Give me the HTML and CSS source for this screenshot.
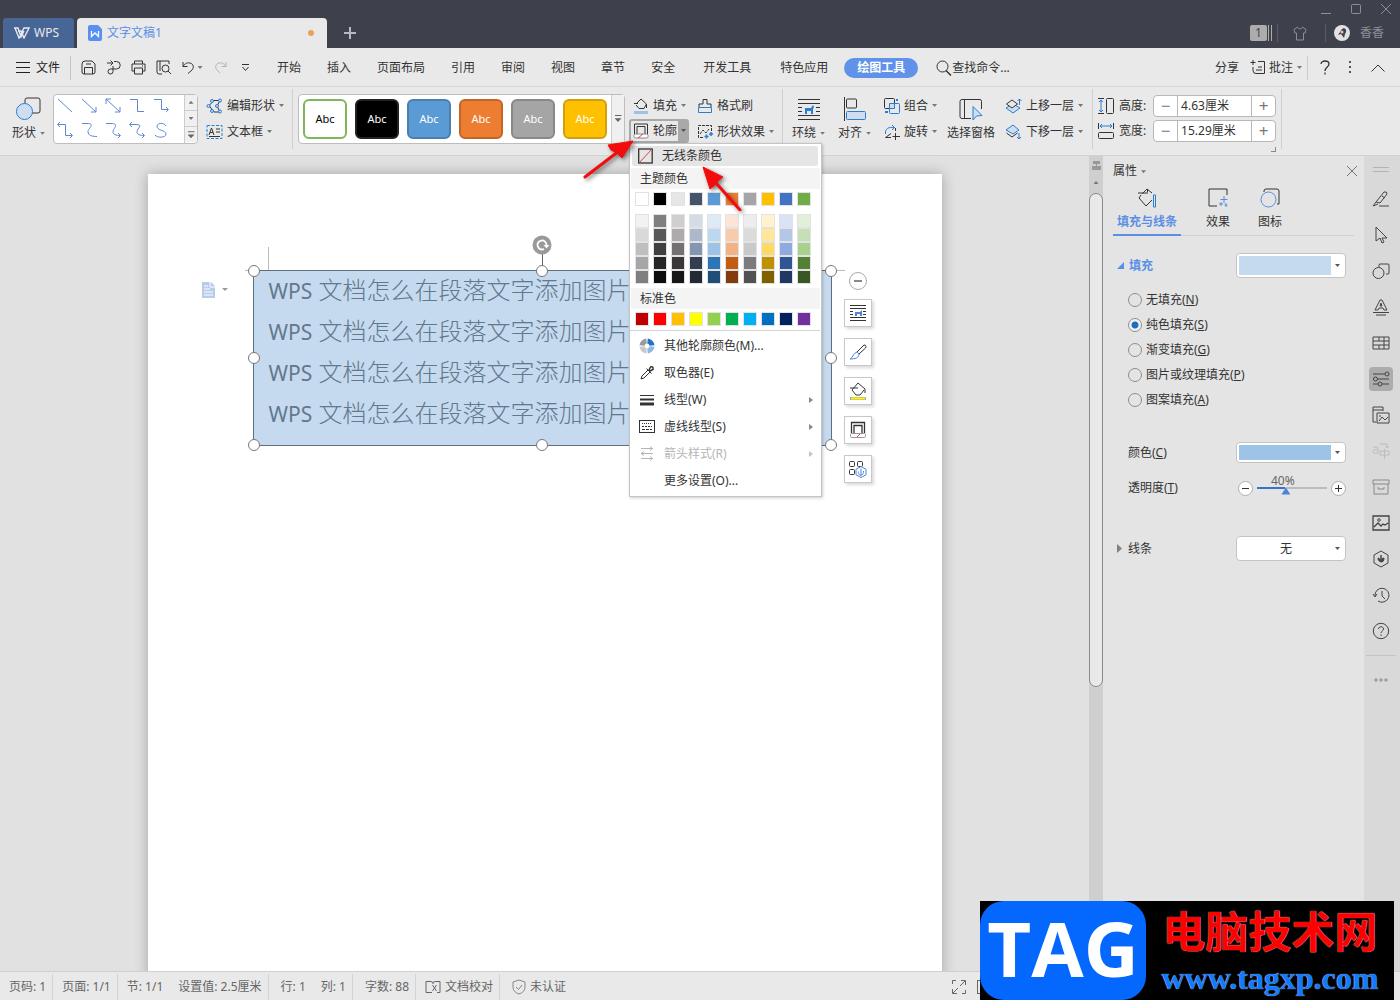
FILE: index.html
```html
<!DOCTYPE html>
<html lang="zh-CN">
<head>
  <meta charset="UTF-8" />
  <meta name="viewport" content="width=device-width, initial-scale=1.0"/>
  <title>文字文稿1 - WPS</title>
  <link rel="stylesheet" href="styles.css">
</head>
<body>
  <header class="titlebar">
    <button class="home-tab">
      <svg class="icon" width="17" height="12" viewBox="0 0 17 12"><path d="M0 1h4l3 9 3-6M4 4h3l3 7 5-10h-5L7 7M1 1l4 10 2-4" stroke-width="1.4"/></svg>
      WPS
    </button>
    <div class="doc-tab">
      <svg width="14" height="16" viewBox="0 0 14 16"><path d="M2 0h8l4 4v10a2 2 0 0 1-2 2H2a2 2 0 0 1-2-2V2a2 2 0 0 1 2-2z" fill="#5a8ff0"/><path d="M3.500 6v5.500L7 8l3.500 3.500V6" fill="none" stroke="#fff" stroke-width="1.300"/></svg>
      <span class="doc-name">文字文稿1</span>
      <span class="unsaved-dot"></span>
    </div>
    <button class="new-tab" aria-label="新建">
      <svg class="icon" width="12" height="12"><path d="M6 0v12M0 6h12" stroke-width="2"/></svg>
    </button>
    <div class="title-right">
      <div class="window-buttons">
        <button aria-label="最小化"><svg class="icon" width="10" height="10"><path d="M0 9.500h10"/></svg></button>
        <button aria-label="最大化"><svg class="icon" width="10" height="10"><rect x=".5" y=".5" width="9" height="9" rx="1"/></svg></button>
        <button aria-label="关闭"><svg class="icon" width="10" height="10"><path d="M0 0l10 10M10 0L0 10"/></svg></button>
      </div>
      <div class="account">
        <span class="badge">1</span>
        <span class="badge-lines"></span>
        <span class="account-sep"></span>
        <svg class="icon" width="14" height="15" viewBox="0 0 14 15"><path d="M4.500 1L1 3.500l1 3.500h1.500v7h7V7H12l1-3.500L9.500 1C9 3.500 5 3.500 4.500 1z"/></svg>
        <span class="account-sep"></span>
        <svg width="16" height="16" viewBox="0 0 16 16"><circle cx="8" cy="8" r="8" fill="#dfe3e5"/><path d="M8 4c2-2 5 0 4 3l-1 2-1 4-3-4-3 1z" fill="#4b3d45"/><circle cx="8" cy="7" r="1.500" fill="#e8c0b0"/></svg>
        <span>香香</span>
      </div>
    </div>
  </header>

  <nav class="menubar">
    <button class="file-btn">
      <svg class="icon" width="14" height="11"><path d="M0 .5h14M0 5.500h14M0 10.500h14"/></svg>
      文件
    </button>
    <div class="quick-tools">
      <button aria-label="保存"><svg class="icon" width="15" height="15" viewBox="0 0 15 15"><path d="M1 4q0-3 3-3h7l3 3v8q0 2-2 2H3q-2 0-2-2zM3.500 14V7.500h8V14M5 4h5"/></svg></button>
      <button aria-label="输出为PDF"><svg class="icon" width="15" height="15" viewBox="0 0 15 15"><path d="M1 3h6M4.500 .5L7 3 4.500 5.500M8 1.500h2.500a3.700 3.700 0 0 1 0 7.500H4.500a2.500 2.500 0 1 0 2.500 2.500V6"/></svg></button>
      <button aria-label="打印"><svg class="icon" width="15" height="15" viewBox="0 0 15 15"><path d="M3.500 4V1h8v3M3.500 11H1V4h13v7h-2.500M3.500 8h8v6h-8zM11 6h1"/></svg></button>
      <button aria-label="打印预览"><svg class="icon" width="16" height="15" viewBox="0 0 16 15"><path d="M6 14H3q-2 0-2-2V1h12v3M4 1v10M12 11l3 3"/><circle cx="9.500" cy="8.500" r="3.500"/></svg></button>
      <button aria-label="撤销" class="undo"><svg class="icon" width="12" height="13" viewBox="0 0 12 13"><path d="M1 1v4.500h4.500M1 5.500C3 2 6 1.500 8 2c4 1 4 5 2 7l-4 3.500"/></svg><i class="caret"></i></button>
      <button aria-label="恢复" class="disabled" disabled><svg class="icon" width="12" height="13" viewBox="0 0 12 13"><path d="M11 1v4.500H6.500M11 5.500C9 2 6 1.500 4 2c-4 1-4 5-2 7l3 3"/></svg></button>
      <button aria-label="自定义"><svg class="icon" width="9" height="8"><path d="M1 .5h7M1.500 3l3 3.500 3-3.500"/></svg></button>
    </div>
    <div class="tabs">
      <a href="#">开始</a>
      <a href="#">插入</a>
      <a href="#">页面布局</a>
      <a href="#">引用</a>
      <a href="#">审阅</a>
      <a href="#">视图</a>
      <a href="#">章节</a>
      <a href="#">安全</a>
      <a href="#" class="wide">开发工具</a>
      <a href="#" class="wide">特色应用</a>
      <a href="#" class="current">绘图工具</a>
    </div>
    <button class="search-btn">
      <svg class="icon" width="16" height="16" viewBox="0 0 16 16"><circle cx="6.500" cy="6.500" r="5.500"/><path d="M10 10.500l5 5" stroke-width="1.500"/></svg>查找命令...
    </button>
    <div class="menu-right">
      <button>分享</button>
      <button><svg class="icon" width="16" height="15" viewBox="0 0 16 15"><path d="M3 0v5M.5 2.500h5M8 1.500h6.500v12H6q-3 0-3-3V7M8 7h4M6 10h6"/></svg>批注<i class="caret"></i></button>
      <span class="menu-sep"></span>
      <button aria-label="帮助"><svg class="icon" width="10" height="15" viewBox="0 0 10 15"><path d="M1 4c0-4 8-4 8 0 0 3-4 3-4 7M5 12.500v2" stroke-width="1.300"/></svg></button>
      <button aria-label="更多"><svg width="3" height="13"><path d="M0 0h2v2H0zM0 5h2v2H0zM0 10h2v2H0z" fill="#555"/></svg></button>
      <button aria-label="收起"><svg class="icon" width="14" height="8"><path d="M.5 7.500L7 1l6.500 6.500"/></svg></button>
    </div>
  </nav>

  <section class="ribbon">
    <div class="ribbon-group first">
      <button class="big-btn">
        <svg class="icon" width="25" height="24" viewBox="0 0 25 24"><rect x="9" y="1" width="15" height="15" rx="2"/><circle cx="8.500" cy="14.500" r="8" class="blue tint"/></svg>
        <span>形状<i class="caret"></i></span>
      </button>
      <div class="line-gallery">
        <div class="line-grid">
          <svg class="icon" viewBox="0 0 24 24"><path d="M4 4l14 13"/></svg>
          <svg class="icon" viewBox="0 0 24 24"><path d="M4 4l14 13M18 12v5h-5"/></svg>
          <svg class="icon" viewBox="0 0 24 24"><path d="M4 4l14 13M18 12v5h-5M4 9V4h5"/></svg>
          <svg class="icon" viewBox="0 0 24 24"><path d="M4 4.500h7.500v12H18"/></svg>
          <svg class="icon" viewBox="0 0 24 24"><path d="M4 4.500h7.500v10H18M16 12l2.500 2.500L16 17"/></svg>
          <svg class="icon" viewBox="0 0 24 24"><path d="M4 5.500h7.500v11H18M6 3L3.500 5.500 6 8M16 14l2.500 2.500L16 19"/></svg>
          <svg class="icon" viewBox="0 0 24 24"><path d="M4 4.500h5c9 0 1 5 1 8 0 4 4 5 9 5"/></svg>
          <svg class="icon" viewBox="0 0 24 24"><path d="M4 4.500h5c9 0 2 5 2 8 0 3 3 4 7 4M16 14l2.500 2.500L16 19"/></svg>
          <svg class="icon" viewBox="0 0 24 24"><path d="M4 5.500h6c8 0 1 4 1 7 0 3 3 4 7 4M6 3L3.500 5.500 6 8M16 14l2.500 2.500L16 19"/></svg>
          <svg class="icon" viewBox="0 0 24 24"><path d="M16 7c-2-4-9-3-9 0 0 5 9 4 9 8 0 4-9 4-11 1"/></svg>
        </div>
        <div class="gallery-scroll">
          <button aria-label="向上"><i class="caret up"></i></button>
          <button aria-label="向下"><i class="caret"></i></button>
          <button aria-label="展开"><i class="caret bar"></i></button>
        </div>
      </div>
      <div class="btn-col">
        <button class="row-btn"><svg class="icon" width="17" height="16" viewBox="0 0 17 16"><path d="M3 7.500l5-5h6l-3 5.500 3 6H8z"/><g class="blue tint"><circle cx="2.500" cy="8" r="1.500"/><circle cx="6" cy="3" r="1.500"/><circle cx="14" cy="2.500" r="1.500"/><circle cx="11" cy="8" r="1.500"/><circle cx="14" cy="13.500" r="1.500"/><circle cx="6" cy="13" r="1.500"/></g></svg>编辑形状<i class="caret"></i></button>
        <button class="row-btn"><svg class="icon" width="17" height="16" viewBox="0 0 17 16"><rect x="1" y="1.500" width="15" height="13" class="blue" stroke-dasharray="3 1.500"/><path d="M3 11l2.500-7L8 11M4 8.500h3M10 5h4M10 8h4M3 12.500h11"/></svg>文本框<i class="caret"></i></button>
      </div>
    </div>
    <div class="ribbon-group styles">
      <div class="style-gallery">
        <button class="style-tile outline">Abc</button>
        <button class="style-tile black">Abc</button>
        <button class="style-tile sky">Abc</button>
        <button class="style-tile orange">Abc</button>
        <button class="style-tile gray">Abc</button>
        <button class="style-tile gold">Abc</button>
        <button class="style-more" aria-label="更多样式"><i class="caret bar"></i></button>
      </div>
      <div class="btn-col">
        <button class="row-btn framed"><svg class="icon" width="16" height="16" viewBox="0 0 16 16"><path d="M1 5.500h4M3.500 5.500L8 1l5.500 5L11 10.500H6L3 7M13.500 6v4"/><path d="M1 14.500h14" stroke="#9cc2ea" stroke-width="3"/></svg>填充<i class="caret"></i></button>
        <div class="outline-wrap">
          <button class="row-btn framed open"><svg class="icon" width="16" height="16" viewBox="0 0 16 16"><path d="M1.500 11V1h13v10M4 11V3.500h8V11"/><rect x="1" y="11" width="14" height="4" rx="1.500" fill="#fff" stroke="#888"/><path d="M5 15l5-4" stroke="#e04040"/></svg>轮廓<span class="split"><i class="caret"></i></span></button>
          <div class="color-menu">
            <button class="menu-item hot"><svg class="icon" width="15" height="16" viewBox="0 0 15 16"><rect x=".7" y="1" width="13.500" height="14" stroke-width="1.300"/><path d="M1.500 14.500l12-13" stroke="#d04545"/></svg>无线条颜色</button>
            <h4>主题颜色</h4>
            <div class="swatches" id="themeColors"></div>
            <div class="swatches shades" id="themeShades"></div>
            <h4>标准色</h4>
            <div class="swatches standard" id="standardColors"></div>
            <button class="menu-item"><svg width="16" height="16" viewBox="0 0 16 16"><g fill="none" stroke-width="5"><path d="M8.500 3A5 5 0 0 1 13 7.500" stroke="#2573c8"/><path d="M13 8.500A5 5 0 0 1 8.500 13" stroke="#8fb8e8"/><path d="M7.500 13A5 5 0 0 1 3 8.500" stroke="#c8c8c8"/><path d="M3 7.500A5 5 0 0 1 7.500 3" stroke="#999"/></g></svg>其他轮廓颜色(M)...</button>
            <button class="menu-item"><svg class="icon" width="16" height="16" viewBox="0 0 16 16"><path d="M2 14l1-3 6-6 2 2-6 6zM7.500 3.500l5 5"/><path d="M10 5l1.500-3q3-1 2.500 2.500L11 6z" stroke-width="1.500"/></svg>取色器(E)</button>
            <button class="menu-item"><svg class="icon" width="16" height="16" viewBox="0 0 16 16"><path d="M1 3.500h14"/><path d="M1 7.500h14" stroke-width="2"/><path d="M1 12h14" stroke-width="3"/></svg>线型(W)<i class="sub"></i></button>
            <button class="menu-item"><svg class="icon" width="16" height="16" viewBox="0 0 16 16"><rect x=".5" y="1.500" width="15" height="12"/><path d="M3 4.500h10" stroke-dasharray="1 1"/><path d="M3 7.500h10" stroke-dasharray="2 1"/><path d="M3 10.500h10" stroke-dasharray="3 1"/></svg>虚线线型(S)<i class="sub"></i></button>
            <button class="menu-item" disabled><svg class="icon" width="16" height="16" viewBox="0 0 16 16"><path d="M2 2.500h12M11 .5l2.500 2-2.500 2M2 7.500h12M5 5.500l-3 2 3 2M2 12.500h12M11 10.500l2.500 2-2.500 2"/></svg>箭头样式(R)<i class="sub"></i></button>
            <button class="menu-item"><svg width="16" height="16"></svg>更多设置(O)...</button>
          </div>
          <svg class="pointer-arrows" width="170" height="80" viewBox="0 0 170 80">
            <g fill="#f40c0c" stroke="#f40c0c" stroke-linejoin="round"><path d="M6 46l34-26" stroke-width="3" stroke-linecap="round"/><path d="M54 10L43 27l-5-5-6-3-3-5z"/><path d="M161 79l-24-27" stroke-width="3" stroke-linecap="round"/><path d="M124 36l20 10-5 4-3 4-5 4z"/></g>
          </svg>
        </div>
      </div>
      <div class="btn-col">
        <button class="row-btn"><svg class="icon" width="16" height="16" viewBox="0 0 16 16"><path d="M2 9V6h4V1.500h4V6h4v3"/><path d="M1.500 9.500h13v5h-13z" class="blue"/></svg>格式刷</button>
        <button class="row-btn"><svg class="icon" width="16" height="16" viewBox="0 0 16 16"><path d="M6 13.500H1.500v-12h13V7M3 10l3-4 3 3 3-4" stroke-dasharray="3 1"/><path d="M7.500 12.500h4M9.500 10.500v4M12 10h4M14 8v4" class="blue" stroke-width="1.500"/></svg>形状效果<i class="caret"></i></button>
      </div>
    </div>
    <div class="ribbon-group spaced">
      <button class="big-btn">
        <svg class="icon" width="24" height="24" viewBox="0 0 24 24"><path d="M1 2.500h22M1 6.500h22M1 10.500h4M19 10.500h4M1 14.500h4M19 14.500h4M1 18.500h22M1 22.500h22"/><path d="M8 17v-6h6l2-3 1 2-1 2v5h-2v-3h-4v3z" fill="#2b7cd3" stroke="none"/></svg>
        <span>环绕<i class="caret"></i></span>
      </button>
      <button class="big-btn">
        <svg class="icon" width="24" height="24" viewBox="0 0 24 24"><path d="M1.500 0v24"/><rect x="3.500" y="2" width="10" height="9" rx="1"/><rect x="3.500" y="14.500" width="19" height="8" rx="1" class="blue tint"/></svg>
        <span>对齐<i class="caret"></i></span>
      </button>
      <div class="btn-col">
        <button class="row-btn"><svg class="icon" width="16" height="16" viewBox="0 0 16 16"><rect x=".5" y=".5" width="10" height="10" rx="1"/><rect x="5.500" y="5.500" width="10" height="10" rx="1" class="blue"/><path d="M5.500 5.500h5v5h-5z" class="blue tint"/><path d="M13 1v2M1 14h3" class="blue" stroke-width="2"/></svg>组合<i class="caret"></i></button>
        <button class="row-btn"><svg class="icon" width="16" height="16" viewBox="0 0 16 16"><path d="M1.500 10C1 4 5 3 10 3.500M8 1l2.500 2.500L8 6" class="blue"/><path d="M7 9.500l-5.500 4H7M8.500 12.500H16M11.500 9v7M11.500 4v3"/></svg>旋转<i class="caret"></i></button>
      </div>
      <button class="big-btn">
        <svg class="icon" width="24" height="24" viewBox="0 0 24 24"><path d="M12 21.500H3q-2 0-2-2v-15q0-2 2-2h18q1.500 0 1.500 2V12M5.500 2.500v19"/><path d="M14 9.500l9 9-5.500 .500-3.500 4z" class="blue tint"/></svg>
        <span>选择窗格</span>
      </button>
      <div class="btn-col">
        <button class="row-btn"><svg class="icon" width="17" height="16" viewBox="0 0 17 16"><path d="M1 10l7-4 7 4-7 5z" class="blue tint"/><path d="M1.500 6L7 2l5.500 4L7 10z" fill="#e9e9e9"/><path d="M14.500 7V1M12.500 3l2-2 2 2" class="blue"/></svg>上移一层<i class="caret"></i></button>
        <button class="row-btn"><svg class="icon" width="17" height="16" viewBox="0 0 17 16"><path d="M1.500 9L7 13l5.500-4"/><path d="M1 6l7-5 6 5-6 4z" class="blue tint"/><path d="M14 9v6M12 13l2 2 2-2" class="blue"/></svg>下移一层<i class="caret"></i></button>
      </div>
    </div>
    <div class="ribbon-group size-group">
      <div class="size-fields">
        <div class="size-row">
          <svg class="icon" width="16" height="18" viewBox="0 0 16 18"><path d="M0 1.500h6M0 16.500h6"/><path d="M3 3v12M1 5l2-2 2 2M1 13l2 2 2-2" class="blue"/><rect x="8.500" y="1.500" width="7" height="15" rx="1"/></svg>
          <label for="shapeHeight">高度:</label>
          <div class="spinner"><button aria-label="减小高度">−</button><input id="shapeHeight" type="text" value="4.63厘米"><button aria-label="增大高度">+</button></div>
        </div>
        <div class="size-row">
          <svg class="icon" width="16" height="18" viewBox="0 0 16 18"><path d="M.5 1v6M15.500 1v6"/><path d="M2 4h12M4 2L2 4l2 2M12 2l2 2-2 2" class="blue"/><rect x=".5" y="10.500" width="15" height="6" rx="1"/></svg>
          <label for="shapeWidth">宽度:</label>
          <div class="spinner"><button aria-label="减小宽度">−</button><input id="shapeWidth" type="text" value="15.29厘米"><button aria-label="增大宽度">+</button></div>
        </div>
      </div>
      <span class="corner"></span>
    </div>
  </section>

  <div class="workspace">
    <main class="canvas">
      <div class="page">
        <svg class="para-mark" width="28" height="16" viewBox="0 0 28 16"><path d="M1 0h9l4 4v12H1z" fill="#b7cce8"/><path d="M3 4h4M3 7h6M3 10h9M3 13h9M9 0v5h5" stroke="#fff" fill="none"/><path d="M21 6h6l-3 3z" fill="#999"/></svg>
        <span class="margin-mark"></span>
        <div class="text-shape">
          <p><span>WPS</span> 文档怎么在段落文字添加图片</p>
          <p><span>WPS</span> 文档怎么在段落文字添加图片</p>
          <p><span>WPS</span> 文档怎么在段落文字添加图片</p>
          <p><span>WPS</span> 文档怎么在段落文字添加图片</p>
          <i class="handle nw"></i><i class="handle n"></i><i class="handle ne"></i>
          <i class="handle w"></i><i class="handle e"></i>
          <i class="handle sw"></i><i class="handle s"></i><i class="handle se"></i>
          <svg class="rotate" width="20" height="34" viewBox="0 0 20 34"><path d="M10.500 18v16" stroke="#666"/><circle cx="10" cy="10" r="9.500" fill="#999"/><path d="M14.500 10A4.500 4.500 0 1 0 12 14" fill="none" stroke="#fff" stroke-width="1.800"/><path d="M11.500 10h6l-3 3.500z" fill="#fff"/></svg>
        </div>
        <div class="float-tools">
          <button class="collapse" aria-label="收起"><svg class="icon" width="8" height="2"><path d="M0 1h8" stroke-width="2"/></svg></button>
          <button aria-label="布局选项"><svg class="icon" width="18" height="18" viewBox="0 0 18 18"><path d="M1 1.500h16M1 4.500h16M1 7.500h3M14 7.500h3M1 10.500h3M14 10.500h3M1 13.500h16M1 16.500h16"/><path d="M6 12V8h5l2-2v6h-2v-2H8v2z" fill="#4b83dd" stroke="none"/></svg></button>
          <button aria-label="形状样式"><svg class="icon" width="18" height="18" viewBox="0 0 18 18"><path d="M8 9l7-7q3 0 1.500 3L10 11z"/><path d="M8 9l2 2c0 4-4 5-9 5 3-1 3-6 7-7z" stroke="#4b83dd"/></svg></button>
          <button aria-label="形状填充"><svg class="icon" width="18" height="18" viewBox="0 0 18 18"><path d="M1 6h8M3 8l6-7 7 6v4M15 8l-4 5H7L3 8"/><path d="M1 16.500h16" stroke="#aaa" stroke-width="3"/><path d="M2 16.500h14" stroke="#fff200" stroke-width="2"/></svg></button>
          <button aria-label="形状轮廓"><svg class="icon" width="18" height="18" viewBox="0 0 18 18"><path d="M2.500 12V1.500h13V12M5 13V4.500h8V13" stroke-width="1.300"/><rect x="1.500" y="12.500" width="15" height="4" rx="1" stroke="#999"/><path d="M8 16l3-3" stroke="#e04040"/></svg></button>
          <button aria-label="更多功能"><svg class="icon" width="19" height="18" viewBox="0 0 19 18"><rect x="1.500" y="1.500" width="5" height="5" rx="1"/><rect x="9.500" y="1.500" width="5" height="5" rx="1"/><rect x="1.500" y="9.500" width="5" height="5" rx="1"/><path d="M13 6.500l5 2.800v5.500L13 17.500l-5-2.700V9.300z" stroke="#4b83dd" fill="#fff"/><path d="M13 8.500v7c-3-1-3-3-2.500-4M13 15c2 0 2.500-2 2.500-4" stroke="#4b83dd"/></svg></button>
        </div>
      </div>
    </main>

    <div class="scrollbar">
      <svg width="9" height="9"><path d="M1 0h7v3H5v2h4v4H0V5h4V3H1z" fill="#999"/></svg>
      <i class="caret up"></i>
      <div class="scroll-thumb"></div>
    </div>

    <aside class="panel">
      <div class="panel-head">
        <span>属性<i class="caret"></i></span>
        <button aria-label="关闭"><svg class="icon" width="10" height="10"><path d="M0 0l10 10M10 0L0 10"/></svg></button>
      </div>
      <div class="panel-tabs">
        <button class="active"><svg class="icon" width="20" height="20" viewBox="0 0 20 20"><path d="M1 5h10M5 6l5-5 5 4M4 7l-2 3 7 8 6-6M10.500 1v3"/><path d="M16.500 7h2v12h-2z" class="blue"/></svg>填充与线条</button>
        <button><svg class="icon" width="20" height="20" viewBox="0 0 20 20"><path d="M9 18H1V1h18v6"/><path d="M16 8v7M12.500 11.500h7M13 14v4M11 16h4M18 15v4M16.500 17h3" stroke="#5a8de0"/></svg>效果</button>
        <button><svg class="icon" width="20" height="20" viewBox="0 0 20 20"><path d="M4 4V3q0-2 2-2h11q2 0 2 2v13h-2"/><circle cx="8.500" cy="11.500" r="7.500" stroke="#5a8de0"/></svg>图标</button>
      </div>

      <section class="prop-section">
        <div class="prop-row head">
          <button class="fold open">填充</button>
          <button class="color-box" aria-label="填充颜色"><span class="fill-pale"></span><i class="caret"></i></button>
        </div>
        <div class="radio-list">
          <label><input type="radio" name="fill"><span>无填充(<u>N</u>)</span></label>
          <label><input type="radio" name="fill" checked><span>纯色填充(<u>S</u>)</span></label>
          <label><input type="radio" name="fill"><span>渐变填充(<u>G</u>)</span></label>
          <label><input type="radio" name="fill"><span>图片或纹理填充(<u>P</u>)</span></label>
          <label><input type="radio" name="fill"><span>图案填充(<u>A</u>)</span></label>
        </div>
        <div class="prop-row">
          <span class="prop-name">颜色(<u>C</u>)</span>
          <button class="color-box small" aria-label="颜色"><span class="fill-blue"></span><i class="caret"></i></button>
        </div>
        <div class="prop-row alpha">
          <label class="prop-name" for="alpha">透明度(<u>T</u>)</label>
          <div class="slider">
            <button aria-label="减小"><svg class="icon" width="7" height="7"><path d="M0 3.500h7"/></svg></button>
            <div class="slider-track">
              <output for="alpha">40%</output>
              <input id="alpha" type="range" min="0" max="100" value="40">
            </div>
            <button aria-label="增大"><svg class="icon" width="7" height="7"><path d="M0 3.500h7M3.500 0v7"/></svg></button>
          </div>
        </div>
      </section>
      <section class="prop-section line-section">
        <div class="prop-row head">
          <label class="fold" for="lineType">线条</label>
          <div class="select-box"><select id="lineType"><option>无</option></select><i class="caret"></i></div>
        </div>
      </section>
    </aside>

    <nav class="sidebar">
      <span class="grip"></span>
      <button aria-label="样式"><svg class="icon" viewBox="0 0 18 18"><path d="M4 12l8-10q3-1 3 2L8 13zM4 12l-3 4 5-2M7 16h10M10 6l3 2"/></svg></button>
      <button aria-label="选择"><svg class="icon" viewBox="0 0 18 18"><path d="M4 1v14l4-3 2 5 2-1-2-4h5z"/></svg></button>
      <button aria-label="形状"><svg class="icon" viewBox="0 0 18 18"><path d="M7 5V3q0-1 1-1h8q1 0 1 1v8q0 1-1 1h-2"/><circle cx="6.500" cy="11" r="5.500"/></svg></button>
      <button aria-label="艺术字"><svg class="icon" viewBox="0 0 18 18"><path d="M3 12L8 2h2l5 10h-3l-1-2H7l-1 2zM9 5l-1 3h2zM1 14.500h16M4 17h10"/></svg></button>
      <button aria-label="表格"><svg class="icon" viewBox="0 0 18 18"><path d="M1 3h16v12H1zM1 7h16M1 11h16M7 3v4M7 11v4M12 3v12"/></svg></button>
      <button aria-label="属性" class="on"><svg class="icon" viewBox="0 0 18 18"><path d="M1 4h12M5 9h12M1 9h1M1 14h5M10 14h7"/><circle cx="15" cy="4" r="2"/><circle cx="3.500" cy="9" r="2"/><circle cx="8" cy="14" r="2"/></svg></button>
      <button aria-label="素材"><svg class="icon" viewBox="0 0 18 18"><path d="M4 16H1V1h10v4M1 4h10M5 7h12v10H5zM7 15l3-4 3 3 3-3M8 9v2"/></svg></button>
      <button aria-label="翻译" class="faded"><svg class="icon" viewBox="0 0 18 18"><path d="M1 6q5-3 5 1v4q-5 1-5-1.500T6 8M8 2h7v4M13 4l2 2 2-2M8 9h9v4H8zM12.500 7v10"/></svg></button>
      <button aria-label="备份"><svg class="icon soft" viewBox="0 0 18 18"><path d="M1 2h16v4H1zM2 6v10h14V6M6 9v2h6V9"/></svg></button>
      <button aria-label="图片"><svg class="icon" viewBox="0 0 18 18"><path d="M1 2h16v14H1zM2 13l4-4 3 3 2-2 2 1 3-2" stroke-width="1.300"/><circle cx="7" cy="6" r="1.300"/></svg></button>
      <button aria-label="推荐"><svg class="icon" viewBox="0 0 18 18"><path d="M9 1l7 4v8l-7 4-7-4V5z"/><path d="M9 5v7c-3-1-3-3-3-4 1 0 2 1 3 3 0-2 2-3 3-3 0 3-1 4-3 4z" fill="#444"/></svg></button>
      <button aria-label="历史"><svg class="icon" viewBox="0 0 18 18"><path d="M3 10a7 7 0 1 1 3 5M1 8l2 3 2-3M10 5v5l3 3"/></svg></button>
      <button aria-label="帮助"><svg class="icon" viewBox="0 0 18 18"><circle cx="9" cy="9" r="7.700"/><path d="M6.500 7c0-3 5-3 5 0 0 2-2.500 2-2.500 4M9 12.500v1.500"/></svg></button>
      <hr>
      <button aria-label="更多"><svg class="icon soft" viewBox="0 0 18 18"><circle cx="4" cy="9" r="1.200"/><circle cx="9" cy="9" r="1.200"/><circle cx="14" cy="9" r="1.200"/></svg></button>
    </nav>
  </div>

  <footer class="statusbar">
    <span>页码: 1</span>
    <span class="cut">页面: 1/1</span>
    <span class="cut">节: 1/1</span>
    <span>设置值: 2.5厘米</span>
    <span class="cut pad">行: 1</span>
    <span>列: 1</span>
    <span class="cut pad">字数: 88</span>
    <span class="cut"><svg class="icon" width="16" height="14" viewBox="0 0 16 14"><path d="M7 12.500H1v-11h5l2 1 2-1h5v11h-3M8 2.500V4M7.500 5l4 6M11.500 5l-4 6"/></svg>文档校对</span>
    <span class="cut pad"><svg class="icon soft" width="14" height="16" viewBox="0 0 14 16"><path d="M7 1l6 2v5q0 5-6 7-6-2-6-7V3zM4 8l2.500 2.500L10 6"/></svg>未认证</span>
    <button class="fullscreen" aria-label="全屏"><svg class="icon" width="14" height="14" viewBox="0 0 14 14"><path d="M.5 4V.5H4M8 6l5-5M9 .5h4.500V5M.5 9v4.500H5M6 8l-5 5M10 13.500h3.500V10"/></svg></button>
    <button aria-label="视图"><svg class="icon" width="14" height="14"><rect x=".5" y=".5" width="13" height="13"/></svg></button>
  </footer>

  <div class="site-mark">
    <span class="mark-tag">TAG</span>
    <div class="mark-text">
      <strong>电脑技术网</strong>
      <span>www.tagxp.com</span>
    </div>
  </div>

  <script src="script.js"></script>
</body>
</html>
```
FILE: styles.css
```css
* {
  box-sizing: border-box;
}

body {
  margin: 0;
  height: 100vh;
  display: flex;
  flex-direction: column;
  overflow: hidden;
  position: relative;
  font-family: "Noto Sans", "Noto Sans CJK SC", sans-serif;
  font-size: 12px;
  line-height: 16px;
  color: #333;
  background: #e1e1e1;
}

button, input, select {
  font: inherit;
  color: inherit;
  border: none;
  background: none;
  padding: 0;
  margin: 0;
}

button {
  display: inline-flex;
  align-items: center;
  justify-content: center;
  white-space: nowrap;
}

a {
  color: inherit;
  text-decoration: none;
}

svg {
  flex: none;
  display: block;
}

.icon {
  fill: none;
  stroke: currentColor;
  stroke-width: 1;
}

.blue {
  stroke: #2b7cd3;
}

.tint {
  fill: #cfdeee;
}

.soft {
  color: #888;
}

.caret {
  display: inline-block;
  flex: none;
  width: 5px;
  height: 3px;
  margin-left: 4px;
  vertical-align: middle;
  background: #777;
  clip-path: polygon(0 0, 100% 0, 50% 100%);
}

.caret.up {
  clip-path: polygon(0 100%, 100% 100%, 50% 0);
}

.caret.bar {
  height: 7px;
  width: 7px;
  background: #666;
  clip-path: polygon(0 0, 100% 0, 100% 14%, 0 14%, 0 45%, 100% 45%, 50% 100%, 0 45%);
}

/* title bar */
.titlebar {
  height: 48px;
  flex: none;
  display: flex;
  align-items: flex-end;
  padding-left: 3px;
  background: #3e414c;
}

.home-tab {
  width: 71px;
  height: 30px;
  gap: 3px;
  margin-right: 3px;
  padding-right: 4px;
  border-radius: 3px 3px 0 0;
  background: #486695;
  color: #e6e9ee;
}

.doc-tab {
  width: 250px;
  height: 30px;
  display: flex;
  align-items: center;
  padding: 0 13px 0 11px;
  gap: 5px;
  border-radius: 4px 4px 0 0;
  background: #e9e9e9;
}

.doc-name {
  color: #5a8fe8;
}

.unsaved-dot {
  width: 6px;
  height: 6px;
  margin-left: auto;
  border-radius: 50%;
  background: #e8a25a;
}

.new-tab {
  width: 46px;
  height: 30px;
  color: #b8b9bd;
}

.title-right {
  margin-left: auto;
  align-self: stretch;
  display: flex;
  flex-direction: column;
  align-items: flex-end;
  color: #8d8f96;
}

.window-buttons {
  display: flex;
  gap: 20px;
  height: 18px;
  padding-right: 9px;
}

.account {
  display: flex;
  align-items: center;
  height: 30px;
  padding-right: 16px;
}

.badge {
  width: 17px;
  height: 16px;
  border-radius: 2px;
  background: #acacac;
  color: #444;
  text-align: center;
}

.badge-lines {
  width: 4px;
  height: 16px;
  border: solid #acacac;
  border-width: 0 1px;
  margin-left: 1px;
}

.account-sep {
  width: 1px;
  height: 18px;
  margin: 0 15px 0 5px;
  background: #5a5d66;
}

.account > svg {
  margin-right: 13px;
}

.account > svg:last-of-type {
  margin: 0 10px 0 0;
}

.account-sep + svg + .account-sep {
  margin-right: 8px;
}

/* menu row */
.menubar {
  height: 39px;
  flex: none;
  display: flex;
  align-items: center;
  padding-top: 1px;
  background: #e9e9e9;
  border-bottom: 1px solid #d6d6d6;
}

.file-btn {
  gap: 6px;
  height: 24px;
  padding: 0 10px 0 16px;
  border-right: 1px solid #c4c4c4;
  color: #222;
}

.quick-tools {
  display: flex;
  padding-left: 5px;
  margin-right: 6px;
}

.quick-tools button {
  width: 25px;
  height: 24px;
}

.quick-tools .undo {
  width: 32px;
}

.quick-tools .disabled {
  color: #b5b5b5;
}

.tabs {
  display: flex;
  align-items: center;
}

.tabs a {
  padding: 0 13px;
}

.tabs .wide {
  padding: 0 14px 0 15px;
}

.tabs .current {
  height: 20px;
  line-height: 20px;
  border-radius: 10px;
  background: #5f92e8;
  color: #fff;
  font-weight: bold;
  margin-left: 2px;
}

.search-btn {
  margin-left: 18px;
}

.menu-right {
  margin-left: auto;
  padding-right: 12px;
  display: flex;
  align-items: center;
}

.menu-right button {
  margin-left: 11px;
}

.menu-right button svg {
  margin-right: 3px;
}

.menu-right .menu-sep ~ button {
  margin-left: 16px;
}

.menu-sep {
  width: 1px;
  height: 24px;
  margin-left: 5px;
  background: #ccc;
}

.menu-right .menu-sep + button {
  margin-left: 12px;
}

/* ribbon */
.ribbon {
  height: 69px;
  flex: none;
  display: flex;
  align-items: center;
  padding-bottom: 5px;
  background: #e9e9e9;
  border-bottom: 1px solid #d2d2d2;
  position: relative;
  z-index: 5;
}

.ribbon-group {
  height: 60px;
  display: flex;
  align-items: center;
  gap: 5px;
  padding: 0 5px;
  border-right: 1px solid #d0d0d0;
}

.ribbon-group.first {
  padding-left: 9px;
}

.ribbon-group.styles {
  gap: 4px;
}

.ribbon-group.spaced {
  gap: 7px;
  padding: 0 6px;
}

.big-btn {
  flex-direction: column;
  gap: 4px;
  min-width: 39px;
}

.btn-col {
  display: flex;
  flex-direction: column;
  align-items: flex-start;
}

.row-btn {
  height: 26px;
  padding: 0 3px;
}

.row-btn svg {
  margin-right: 4px;
}

.row-btn.framed {
  border: 1px solid transparent;
}

.row-btn.open {
  height: 24px;
  width: 60px;
  justify-content: flex-start;
  border: 2px solid #a9a9a9;
  border-radius: 3px;
  padding: 0 0 0 2px;
  position: relative;
}

.split {
  flex: 1;
  align-self: stretch;
  display: flex;
  align-items: center;
  margin-left: 1px;
  background: #a9a9a9;
}

.split .caret {
  background: #555;
  margin-left: 3px;
}

.line-gallery,
.style-gallery {
  display: flex;
  height: 50px;
  border: 1px solid #bdbdbd;
  border-radius: 4px;
  background: #fff;
}

.line-grid {
  display: grid;
  grid-template-columns: repeat(5, 24px);
  grid-template-rows: 24px 24px;
  padding-right: 10px;
}

.line-grid svg {
  color: #5f88d0;
}

.gallery-scroll {
  width: 13px;
  display: flex;
  flex-direction: column;
  border-left: 1px solid #ccc;
}

.gallery-scroll button {
  flex: 1;
  background: #f0f0f0;
  border-top: 1px solid #ccc;
}

.gallery-scroll button:first-child {
  border-top: none;
}

.gallery-scroll .caret,
.style-more .caret {
  margin: 0;
}

.style-gallery {
  padding-left: 4px;
  gap: 8px;
  align-items: center;
}

.style-tile {
  width: 44px;
  height: 40px;
  border: 2px solid;
  border-radius: 6px;
  color: #fff;
  font-size: 11px;
}

.outline { background: #fff; border-color: #7fb65c; color: #000; }
.black { background: #000; border-color: #222; }
.sky { background: #5b9bd5; border-color: #4a7fb0; }
.orange { background: #ed7d31; border-color: #c26527; }
.gray { background: #a5a5a5; border-color: #888; }
.gold { background: #ffc000; border-color: #d0a010; }

.style-more {
  align-self: stretch;
  width: 13px;
  margin-left: -4px;
  border-left: 1px solid #ccc;
  background: #f0f0f0;
}

.size-group {
  padding: 0 5px;
  position: relative;
}

.size-fields {
  display: flex;
  flex-direction: column;
  gap: 3px;
}

.size-row {
  display: flex;
  align-items: center;
  gap: 5px;
}

.size-row label {
  width: 29px;
}

.spinner {
  display: flex;
  width: 123px;
  height: 22px;
  border: 1px solid #b8b8b8;
  border-radius: 4px;
  background: #fff;
}

.spinner button {
  width: 23px;
  font-size: 17px;
  color: #777;
}

.spinner input {
  flex: 1;
  min-width: 0;
  padding-left: 3px;
  border: solid #b8b8b8;
  border-width: 0 1px;
}

.corner {
  position: absolute;
  right: 5px;
  bottom: -3px;
  width: 5px;
  height: 5px;
  border: solid #888;
  border-width: 0 1px 1px 0;
}

/* outline colour menu */
.outline-wrap {
  position: relative;
  height: 26px;
}

.color-menu {
  position: absolute;
  top: 24px;
  left: 0;
  width: 193px;
  padding: 2px 0 1px;
  border: 1px solid #c4c4c4;
  background: #fff;
  box-shadow: 1px 1px 3px rgba(0, 0, 0, 0.2);
}

.color-menu h4 {
  margin: 0 1px;
  padding-left: 9px;
  height: 21px;
  line-height: 21px;
  font-size: 12px;
  font-weight: normal;
  background: #f4f4f4;
}

.menu-item {
  width: 100%;
  height: 27px;
  justify-content: flex-start;
  padding-left: 9px;
  gap: 9px;
}

.menu-item.hot {
  width: 186px;
  height: 20px;
  margin-left: 2px;
  padding-left: 6px;
  border-radius: 2px;
  background: #e5e5e5;
}

.menu-item:disabled {
  color: #b5b5b5;
}

.sub {
  margin: 0 8px 0 auto;
  width: 4px;
  height: 6px;
  background: #888;
  clip-path: polygon(0 0, 100% 50%, 0 100%);
}

.menu-item:disabled .sub {
  background: #c4c4c4;
}

.swatches {
  display: grid;
  grid-template-columns: repeat(10, 14px);
  column-gap: 4px;
  padding: 3px 0 0 5px;
}

.swatches button {
  height: 14px;
  border: 1px solid #e2e2e6;
}

.shades {
  padding: 8px 0 4px 5px;
}

.standard {
  padding-bottom: 4px;
  margin: 0 1px 2px 0;
  border-bottom: 1px solid #d4d4d4;
}

.pointer-arrows {
  position: absolute;
  top: 12px;
  left: -50px;
  pointer-events: none;
  filter: drop-shadow(2px 2px 2px rgba(0, 0, 0, 0.5));
}

/* document */
.workspace {
  flex: 1;
  min-height: 0;
  display: flex;
}

.canvas {
  flex: 1;
  min-width: 0;
  padding-top: 18px;
  overflow: hidden;
  background: #e1e1e1;
}

.page {
  position: relative;
  width: 794px;
  height: 1123px;
  margin: 0 auto;
  background: #fff;
  box-shadow: 0 0 13px rgba(0, 0, 0, 0.28);
}

.para-mark {
  position: absolute;
  left: 53px;
  top: 108px;
}

.margin-mark {
  position: absolute;
  left: 97px;
  top: 73px;
  width: 600px;
  height: 24px;
  border-bottom: 1px solid #bbb;
}

.margin-mark::before {
  content: "";
  display: block;
  width: 1px;
  height: 24px;
  margin-left: 23px;
  background: #bbb;
}

.text-shape {
  position: absolute;
  left: 105px;
  top: 96px;
  width: 579px;
  height: 176px;
  padding: 0 15px;
  border: 1px solid #5e6f80;
  background: #c5daee;
  color: #62788c;
}

.text-shape p {
  margin: 0;
  font-size: 24px;
  font-weight: 300;
  line-height: 38px;
  height: 41px;
}

.text-shape p span {
  font-size: 21px;
  font-weight: 400;
}

.handle {
  position: absolute;
  width: 12px;
  height: 12px;
  margin: -6px;
  border: 1px solid #777;
  border-radius: 50%;
  background: #fff;
}

.nw, .n, .ne { top: 0; }
.w, .e { top: 50%; }
.sw, .s, .se { top: 100%; }
.nw, .w, .sw { left: 0; }
.n, .s { left: 50%; }
.ne, .e, .se { left: 100%; }

.rotate {
  position: absolute;
  left: 278px;
  top: -36px;
}

.handle.n {
  z-index: 1;
}

.float-tools {
  position: absolute;
  left: 696px;
  top: 98px;
  display: flex;
  flex-direction: column;
  align-items: center;
  gap: 11px;
}

.float-tools button {
  width: 28px;
  height: 28px;
  border: 1px solid #c8c8c8;
  background: #fff;
  box-shadow: 2px 2px 3px rgba(0, 0, 0, 0.15);
}

.float-tools .collapse {
  width: 18px;
  height: 18px;
  margin-bottom: -2px;
  border-radius: 50%;
  border-color: #aaa;
  color: #888;
  box-shadow: none;
}

.scrollbar {
  width: 14px;
  display: flex;
  flex-direction: column;
  align-items: center;
  padding-top: 5px;
  background: #cfcfcf;
}

.scrollbar .caret {
  margin: 11px 0 9px;
}

.scroll-thumb {
  width: 14px;
  height: 61%;
  border: 1px solid #8a8a8a;
  border-radius: 7px;
  background: #e9e9e9;
}

/* properties panel */
.panel {
  width: 261px;
  padding: 0 10px;
  background: #e4e4e4;
}

.panel-head {
  display: flex;
  justify-content: space-between;
  align-items: center;
  height: 30px;
  margin-right: -6px;
}

.panel-head button {
  color: #777;
  padding: 3px;
}

.panel-tabs {
  display: flex;
  height: 50px;
  gap: 21px;
  border-bottom: 1px solid #d0d0d0;
}

.panel-tabs button {
  flex-direction: column;
  justify-content: flex-start;
  gap: 6px;
  padding: 2px 4px 0;
  height: 50px;
  border-bottom: 2px solid transparent;
}

.panel-tabs button + button + button {
  margin-left: -1px;
}

.panel-tabs .active {
  color: #5a8fe8;
  font-weight: bold;
  border-bottom-color: #5a8fe8;
}

.panel-tabs .active svg {
  color: #333;
}

.prop-section {
  padding: 17px 8px 0 4px;
}

.prop-row {
  display: flex;
  align-items: center;
  justify-content: space-between;
  padding-left: 11px;
  margin-bottom: 17px;
}

.prop-row.head {
  padding-left: 0;
  margin-bottom: 9px;
}

.fold {
  display: flex;
  align-items: center;
  gap: 6px;
}

.fold::before {
  content: "";
  width: 5px;
  height: 9px;
  background: #7c8288;
  clip-path: polygon(0 0, 100% 50%, 0 100%);
}

.fold.open {
  color: #5a8fe8;
  font-weight: bold;
  gap: 5px;
}

.fold.open::before {
  width: 7px;
  height: 7px;
  background: #5a8fe8;
  clip-path: polygon(100% 0, 100% 100%, 0 100%);
}

.color-box,
.select-box {
  width: 110px;
  height: 25px;
  border: 1px solid #c4c4c4;
  border-radius: 4px;
  background: #fff;
}

.color-box {
  justify-content: flex-start;
  padding: 2px;
}

.color-box.small {
  height: 21px;
}

.color-box span {
  width: 92px;
  align-self: stretch;
}

.fill-pale {
  background: #c5daee;
}

.fill-blue {
  background: #9dc3e6;
}

.color-box .caret,
.select-box .caret {
  background: #555;
}

.radio-list {
  display: flex;
  flex-direction: column;
  padding-left: 11px;
  margin-bottom: 30px;
}

.radio-list label {
  display: flex;
  align-items: center;
  gap: 4px;
  height: 25px;
}

.radio-list input {
  appearance: none;
  width: 14px;
  height: 14px;
  border: 1px solid #8e8e8e;
  border-radius: 50%;
}

.radio-list input:checked {
  background: radial-gradient(circle, #1c6fc0 0 3px, #f2f2f2 4px);
}

.slider {
  display: flex;
  align-items: center;
  width: 108px;
  gap: 4px;
}

.slider button {
  width: 15px;
  height: 15px;
  border: 1px solid #b0b0b0;
  border-radius: 50%;
  background: #fff;
}

.slider-track {
  flex: 1;
  position: relative;
  display: flex;
}

.slider-track output {
  position: absolute;
  left: 14px;
  top: -8px;
  color: #666;
}

.slider-track input {
  appearance: none;
  width: 100%;
  height: 15px;
  background: linear-gradient(90deg, #3a72c8 40%, #b9bcc2 40%) center / 100% 2px no-repeat;
}

.slider-track input::-webkit-slider-thumb {
  appearance: none;
  width: 9px;
  height: 7px;
  margin-top: 6px;
  background: #4b83dd;
  clip-path: polygon(50% 0, 100% 100%, 0 100%);
}

.line-section {
  padding-top: 23px;
}

.select-box {
  display: flex;
  align-items: center;
}

.select-box select {
  appearance: none;
  flex: 1;
  text-align-last: center;
}

.select-box .caret {
  margin: 0 5px 0 0;
}

/* right tool strip */
.sidebar {
  width: 36px;
  display: flex;
  flex-direction: column;
  align-items: center;
  gap: 12px;
  padding: 11px 2px 0 0;
  background: #d9d9d9;
}

.grip {
  width: 16px;
  height: 5px;
  margin-bottom: 3px;
  border: solid #b4b4b4;
  border-width: 1px 0;
}

.sidebar button {
  width: 24px;
  height: 24px;
  border-radius: 4px;
  color: #444;
}

.sidebar svg {
  width: 18px;
  height: 18px;
}

.sidebar .on {
  background: #acacac;
}

.sidebar .faded {
  color: #bcbcbc;
}

.sidebar hr {
  width: 30px;
  margin: 0;
  border: none;
  border-top: 1px solid #c4c4c4;
}

/* status bar */
.statusbar {
  height: 29px;
  flex: none;
  display: flex;
  align-items: center;
  padding-top: 1px;
  background: #e9e9e9;
  border-top: 1px solid #cfcfcf;
  color: #666;
}

.statusbar span {
  display: flex;
  align-items: center;
  gap: 4px;
  height: 26px;
  padding: 0 6px 0 9px;
  white-space: nowrap;
}

.statusbar .cut {
  border-left: 1px solid #d4d4d4;
}

.statusbar .pad {
  padding-left: 12px;
}

.fullscreen {
  position: absolute;
  left: 952px;
}

.statusbar .fullscreen + button {
  position: absolute;
  left: 977px;
}

/* site mark in the corner */
.site-mark {
  position: absolute;
  right: 6px;
  bottom: 0;
  z-index: 10;
  width: 414px;
  height: 99px;
  display: flex;
  background: #000;
}

.mark-tag {
  width: 166px;
  height: 99px;
  border-radius: 24px;
  background: #0468ff;
  color: #fff;
  font: bold 76px/94px "Open Sans", "Noto Sans", sans-serif;
  text-align: center;
}

.mark-text {
  flex: 1;
  text-align: center;
}

.mark-text strong {
  display: block;
  font: 700 43px/56px "Noto Sans CJK SC", sans-serif;
  color: #f00;
  text-shadow: 0 0 1px #fff;
}

.mark-text span {
  display: block;
  font: bold 32px/42px "Liberation Serif", serif;
  color: #0f7bff;
  text-shadow: 0 0 1px #fff;
}
```
FILE: script.js
```js
const theme = ["#ffffff", "#000000", "#e7e6e6", "#44546a", "#5b9bd5", "#ed7d31", "#a5a5a5", "#ffc000", "#4472c4", "#70ad47"];

const shades = [
  ["#f2f2f2", "#7f7f7f", "#d0cece", "#d6dce5", "#deebf7", "#fbe5d6", "#ededed", "#fff2cc", "#dae3f3", "#e2f0d9"],
  ["#d9d9d9", "#595959", "#afabab", "#adb9ca", "#bdd7ee", "#f8cbad", "#dbdbdb", "#ffe699", "#b4c7e7", "#c5e0b4"],
  ["#bfbfbf", "#404040", "#767171", "#8497b0", "#9dc3e6", "#f4b183", "#c9c9c9", "#ffd966", "#8faadc", "#a9d18e"],
  ["#a6a6a6", "#262626", "#3b3838", "#333f50", "#2e75b6", "#c55a11", "#7b7b7b", "#bf9000", "#2f5597", "#548235"],
  ["#7f7f7f", "#0d0d0d", "#181717", "#222a35", "#1f4e79", "#843c0c", "#525252", "#7f6000", "#203864", "#385723"]
];

const standard = ["#c00000", "#ff0000", "#ffc000", "#ffff00", "#92d050", "#00b050", "#00b0f0", "#0070c0", "#002060", "#7030a0"];

function fillSwatches(id, colors) {
  const box = document.getElementById(id);
  colors.forEach(color => {
    const btn = document.createElement("button");
    btn.style.background = color;
    btn.setAttribute("aria-label", color);
    box.appendChild(btn);
  });
}

fillSwatches("themeColors", theme);
fillSwatches("themeShades", shades.flat());
fillSwatches("standardColors", standard);
```
